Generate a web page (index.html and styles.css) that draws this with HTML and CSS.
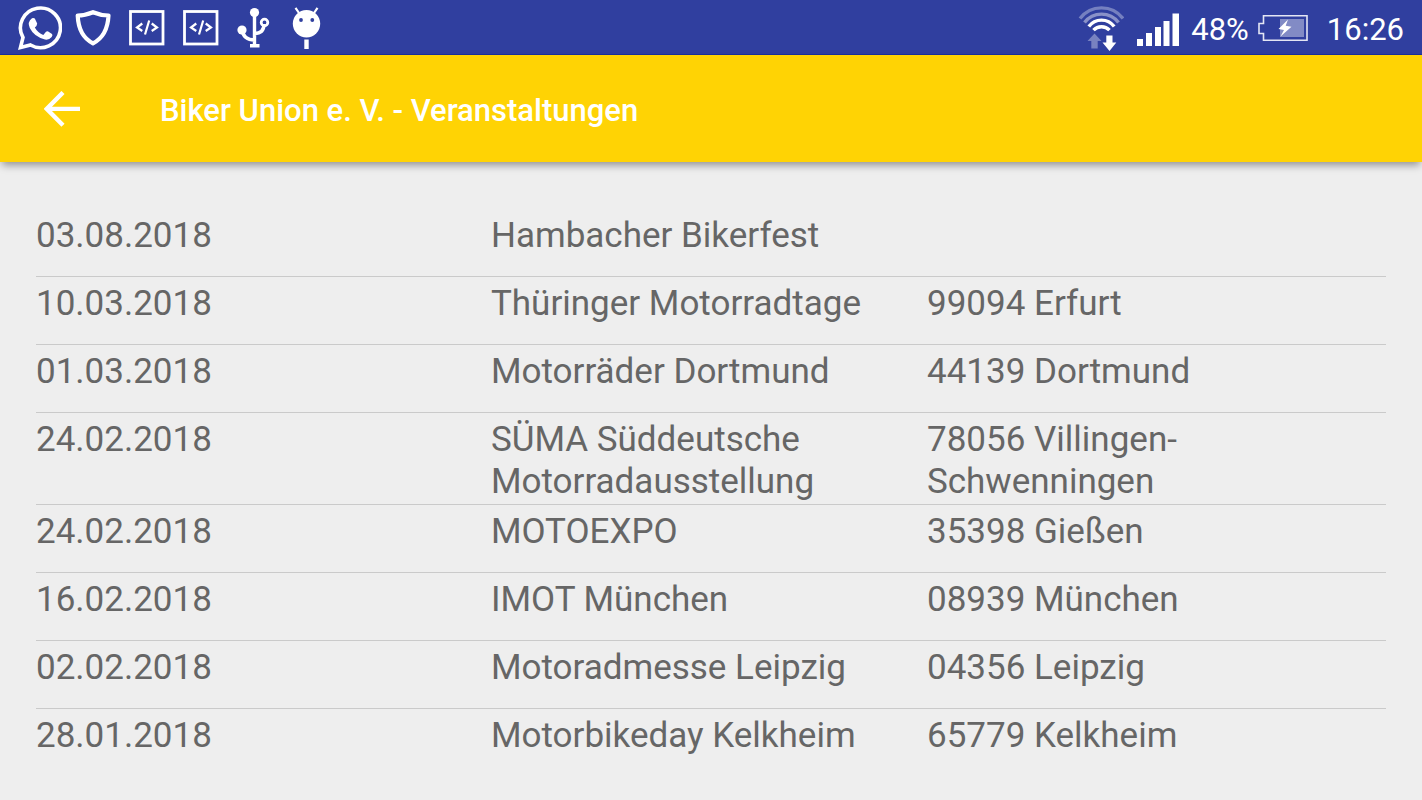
FILE: index.html
```html
<!DOCTYPE html>
<html lang="de">
<head>
<meta charset="utf-8">
<meta name="viewport" content="width=device-width, initial-scale=1">
<title>Biker Union e. V. - Veranstaltungen</title>
<link rel="stylesheet" href="styles.css">
</head>
<body>
<div class="status-bar">
  <div class="status-left">
    <svg class="icon whatsapp" width="44" height="44" viewBox="0 0 44 44" aria-hidden="true">
      <path d="M2.500 41.500 L5 31.500 A20 19.800 0 1 1 12.500 39 Z" fill="none" stroke="#fff" stroke-width="3.600" stroke-linejoin="miter"/>
      <path d="M14 12.300 Q15.500 11.700 16.800 12.500 L19.200 17.500 Q19.200 19.500 16.800 21.500 Q20 27 25.300 29 L28 25.800 Q29.200 25 30.200 25.600 L34 28 Q35 29 33.700 31 Q31 34.200 27 33.500 Q16 30.700 11.800 22 Q9 16 14 12.300 Z" fill="#fff"/>
    </svg>
    <svg class="icon" width="36" height="38" viewBox="0 0 36 38" aria-hidden="true">
      <path d="M18 3.200 Q10 6.500 2.700 6.500 Q3.500 27 18 34.300 Q32.500 27 33.500 6.500 Q26 6.500 18 3.200 Z" fill="none" stroke="#fff" stroke-width="4.200" stroke-linejoin="round"/>
    </svg>
    <svg class="icon" width="36" height="36" viewBox="0 0 36 36" aria-hidden="true">
      <rect x="1.500" y="1.500" width="32.500" height="32.500" fill="none" stroke="#fff" stroke-width="2.800"/>
      <path d="M13.300 13.500 L8 17.500 L13.300 21 M22.700 13.500 L28 17.500 L22.700 21 M20.200 10.500 L16 24.500" fill="none" stroke="#fff" stroke-width="2.200"/>
    </svg>
    <svg class="icon" width="36" height="36" viewBox="0 0 36 36" aria-hidden="true">
      <rect x="1.500" y="1.500" width="32.500" height="32.500" fill="none" stroke="#fff" stroke-width="2.800"/>
      <path d="M13.300 13.500 L8 17.500 L13.300 21 M22.700 13.500 L28 17.500 L22.700 21 M20.200 10.500 L16 24.500" fill="none" stroke="#fff" stroke-width="2.200"/>
    </svg>
    <svg class="icon" width="34" height="40" viewBox="0 0 34 40" aria-hidden="true">
      <path d="M17.500 5 V38 M5 22 Q6.500 32 17.500 32 M27 16 Q27 25.500 17.500 25.500" fill="none" stroke="#fff" stroke-width="3.400"/>
      <circle cx="17.500" cy="4.600" r="4.600" fill="#fff"/>
      <circle cx="5" cy="22" r="4.600" fill="#fff"/>
      <circle cx="27.500" cy="14.500" r="3.300" fill="none" stroke="#fff" stroke-width="2.800"/>
      <rect x="13" y="36" width="9.500" height="3.500" fill="#fff"/>
    </svg>
    <svg class="icon android" width="30" height="42" viewBox="0 0 30 42" aria-hidden="true">
      <path d="M3.500 .8 L7 6 M25.500 .8 L22 6" stroke="#fff" stroke-width="2.200"/>
      <circle cx="14.500" cy="16.700" r="13.700" fill="#fff"/>
      <circle cx="9" cy="13" r="1.900" fill="#303f9f"/>
      <circle cx="20.300" cy="13" r="1.900" fill="#303f9f"/>
      <rect x="12.300" y="32.500" width="4.400" height="9.500" fill="#fff"/>
    </svg>
  </div>
  <div class="status-right">
    <svg class="icon" width="46" height="46" viewBox="0 0 46 46" fill="none" aria-hidden="true">
      <g stroke-width="3.400">
        <path d="M2 13.500 A27 27 0 0 1 45 13.500" stroke="#7580c0"/>
        <path d="M6.500 17.500 A21.500 21.500 0 0 1 40.500 17.500" stroke="#8991c8"/>
        <path d="M10.800 21.500 A15.800 15.800 0 0 1 36.200 21.500" stroke="#fff"/>
        <path d="M15.500 25.200 A11 11 0 0 1 31.500 25.200" stroke="#fff"/>
      </g>
      <path d="M16.500 28.500 L23.500 36 H19.700 V43.500 H13.300 V36 H9.500 Z" fill="#7882c0"/>
      <path d="M28.300 30.500 H34.500 V37.500 H38.300 L31.500 46 L24.500 37.500 H28.300 Z" fill="#fff"/>
    </svg>
    <svg class="icon signal" width="44" height="39" viewBox="0 -3 44 39" aria-hidden="true">
      <path d="M1 28h6v7h-6z M10 22h6v13h-6z M19 16h6v19h-6z M27.500 10h6v25h-6z M36.500 2.500h6.500v32.500h-6.500z" fill="#fff"/>
    </svg>
    <span class="percent">48%</span>
    <svg class="icon" width="52" height="28" viewBox="0 0 52 28" aria-hidden="true">
      <path d="M6.500 1.700 H50 V26.300 H6.500 V19.500 H2 V9.500 H6.500 Z" fill="none" stroke="#e4e6f4" stroke-width="1.600"/>
      <rect x="23" y="5" width="24" height="18" fill="#828bc5"/>
      <path d="M31 5.500 L21.500 15 L27 16 L23.500 22.500 L34.500 12.700 L28.700 11.700 Z" fill="#fff"/>
    </svg>
    <span class="clock">16:26</span>
  </div>
</div>
<header class="app-bar">
  <button class="back" type="button" aria-label="Zurück">
    <svg class="icon" width="36" height="36" viewBox="0 0 36 36" aria-hidden="true">
      <path d="M36 17.900 H3 M19 1.500 L2.700 17.900 L19 34.300" fill="none" stroke="#fff" stroke-width="4.400"/>
    </svg>
  </button>
  <h1 class="title">Biker Union e. V. - Veranstaltungen</h1>
</header>
<main class="content">
  <table class="events" aria-label="Veranstaltungen">
    <colgroup><col class="col-date"><col class="col-name"><col class="col-place"></colgroup>
    <tbody>
      <tr><td>03.08.2018</td><td>Hambacher Bikerfest</td><td></td></tr>
      <tr><td>10.03.2018</td><td>Thüringer Motorradtage</td><td>99094 Erfurt</td></tr>
      <tr><td>01.03.2018</td><td>Motorräder Dortmund</td><td>44139 Dortmund</td></tr>
      <tr><td>24.02.2018</td><td>SÜMA Süddeutsche Motorradausstellung</td><td>78056 Villingen-Schwenningen</td></tr>
      <tr><td>24.02.2018</td><td>MOTOEXPO</td><td>35398 Gießen</td></tr>
      <tr><td>16.02.2018</td><td>IMOT München</td><td>08939 München</td></tr>
      <tr><td>02.02.2018</td><td>Motoradmesse Leipzig</td><td>04356 Leipzig</td></tr>
      <tr><td>28.01.2018</td><td>Motorbikeday Kelkheim</td><td>65779 Kelkheim</td></tr>
    </tbody>
  </table>
</main>
</body>
</html>
```
FILE: styles.css
```css
* {
  box-sizing: border-box;
}

body {
  margin: 0;
  background: #eeeeee;
  color: #666666;
  font-family: Roboto, "Noto Sans", sans-serif;
}

.icon {
  display: block;
  flex: none;
}

.status-bar {
  display: flex;
  align-items: center;
  justify-content: space-between;
  height: 55px;
  padding: 1px 18px 0;
  background: #303f9f;
  border-bottom: 1px solid #1a2f9c;
  color: #ffffff;
  font-size: 31px;
  line-height: 36px;
}

.status-left {
  display: flex;
  align-items: center;
  gap: 18px;
}

.whatsapp {
  margin-right: -5px;
}

.android {
  margin-left: 3px;
}

.status-right {
  display: flex;
  align-items: center;
  gap: 9px;
}

.signal {
  margin-left: 3px;
}

.percent {
  margin: 0 -1px 0 2px;
  padding-top: 4px;
}

.clock {
  margin-left: 9px;
  padding-top: 4px;
}

.app-bar {
  display: flex;
  align-items: center;
  gap: 80px;
  height: 107px;
  padding: 0 44px;
  background: #ffd304;
  box-shadow: 0 5px 8px -2px rgba(0, 0, 0, 0.4);
}

.back {
  padding: 0;
  border: 0;
  background: none;
  cursor: pointer;
}

.title {
  margin: 0;
  padding-top: 4px;
  color: #ffffff;
  font-size: 31px;
  font-weight: 500;
  line-height: 38px;
}

.content {
  padding: 47px 36px 0;
}

.events {
  width: 100%;
  table-layout: fixed;
  border-collapse: separate;
  border-spacing: 0;
  font-size: 35px;
  line-height: 42px;
}

.col-date {
  width: 33.7%;
}

.col-name {
  width: 32.3%;
}

.col-place {
  width: 34%;
}

.events td {
  height: 68px;
  padding: 6px 0 1px;
  border-bottom: 1px solid #cacaca;
  vertical-align: top;
}

.events tr:last-child td {
  border-bottom: 0;
}
```
